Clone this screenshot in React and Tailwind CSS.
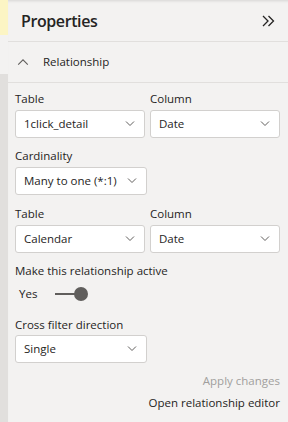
import React, { useState } from 'react';

const Chevron = ({ up = false, size = 10 }) => (
  <svg width={size} height={size * 0.6} viewBox="0 0 10 6">
    <path
      d={up ? 'M1 5.5 L5 1.5 L9 5.5' : 'M1 0.5 L5 4.5 L9 0.5'}
      fill="none"
      stroke="#605e5c"
      strokeWidth={up ? 0.9 : 1}
    />
  </svg>
);

const Select = ({ value, width }) => (
  <div
    className={`flex items-center justify-between h-[28px] bg-white border border-[#d2d0ce] rounded-[3px] pl-[8px] pr-[9px] text-[11.5px] text-[#252423] ${width}`}
  >
    <span>{value}</span>
    <Chevron />
  </div>
);

const Label = ({ children, className = '' }) => (
  <div className={`text-[11.5px] text-[#252423] leading-[16px] ${className}`}>{children}</div>
);

const App = () => {
  const [active, setActive] = useState(true);

  return (
    <div
      className="flex w-[288px] h-[422px] bg-[#f3f2f1] overflow-hidden"
      style={{ fontFamily: '"Open Sans", "Noto Sans", sans-serif' }}
    >
      {/* left strip from canvas */}
      <div className="w-[8px] flex flex-col shrink-0">
        <div className="h-[35px] bg-[#fcf5c4]" />
        <div className="h-[39px] bg-[#f3f2f1]" />
        <div className="flex-1 bg-[#e1dfdd]" />
      </div>

      <div className="flex-1 flex flex-col bg-[#f3f2f1] shadow-[inset_0_3px_3px_-2px_rgba(0,0,0,0.12)]">
        {/* header */}
        <div className="flex items-center justify-between h-[42px] pl-[13px] pr-[14px] border-b border-[#e1dfdd]">
          <span className="text-[16px] font-semibold tracking-[-0.4px] text-[#252423]">Properties</span>
          <svg width="13" height="12" viewBox="0 0 13 12">
            <path d="M1 1 L6 6 L1 11 M6.5 1 L11.5 6 L6.5 11" fill="none" stroke="#252423" strokeWidth="1.3" />
          </svg>
        </div>

        {/* section */}
        <div className="flex items-center h-[41px] pl-[9px] border-b border-[#e1dfdd]">
          <Chevron up size={12} />
          <span className="ml-[14px] text-[11.5px] text-[#252423]">Relationship</span>
        </div>

        <div className="flex flex-col pl-[7px] pr-[9px] pt-[8px]">
          <div className="flex gap-[5px]">
            <div className="flex flex-col gap-[3px]">
              <Label>Table</Label>
              <Select value="1click_detail" width="w-[130px]" />
            </div>
            <div className="flex flex-col gap-[3px]">
              <Label>Column</Label>
              <Select value="Date" width="w-[130px]" />
            </div>
          </div>

          <Label className="mt-[10px]">Cardinality</Label>
          <div className="mt-[3px]">
            <Select value="Many to one (*:1)" width="w-[132px]" />
          </div>

          <div className="flex gap-[5px] mt-[11px]">
            <div className="flex flex-col gap-[3px]">
              <Label>Table</Label>
              <Select value="Calendar" width="w-[130px]" />
            </div>
            <div className="flex flex-col gap-[3px]">
              <Label>Column</Label>
              <Select value="Date" width="w-[130px]" />
            </div>
          </div>

          <Label className="mt-[10px]">Make this relationship active</Label>
          <div className="flex items-center mt-[7px] pl-[4px] h-[16px]">
            <span className="text-[11.5px] text-[#252423] w-[36px]">{active ? 'Yes' : 'No'}</span>
            <button
              type="button"
              onClick={() => setActive(!active)}
              className="relative w-[33px] h-[16px]"
            >
              <span className="absolute left-0 right-[6px] top-[7px] h-[2px] bg-[#605e5c]" />
              <span className="absolute right-0 top-[1px] w-[14px] h-[14px] rounded-full bg-[#605e5c]" />
            </button>
          </div>

          <Label className="mt-[15px]">Cross filter direction</Label>
          <div className="mt-[2px]">
            <Select value="Single" width="w-[132px]" />
          </div>

          <div className="flex flex-col items-end mt-[9px] gap-[5px] text-[11.5px]">
            <span className="text-[#a19f9d]">Apply changes</span>
            <span className="text-[#252423]">Open relationship editor</span>
          </div>
        </div>
      </div>
    </div>
  );
};

export default App;
